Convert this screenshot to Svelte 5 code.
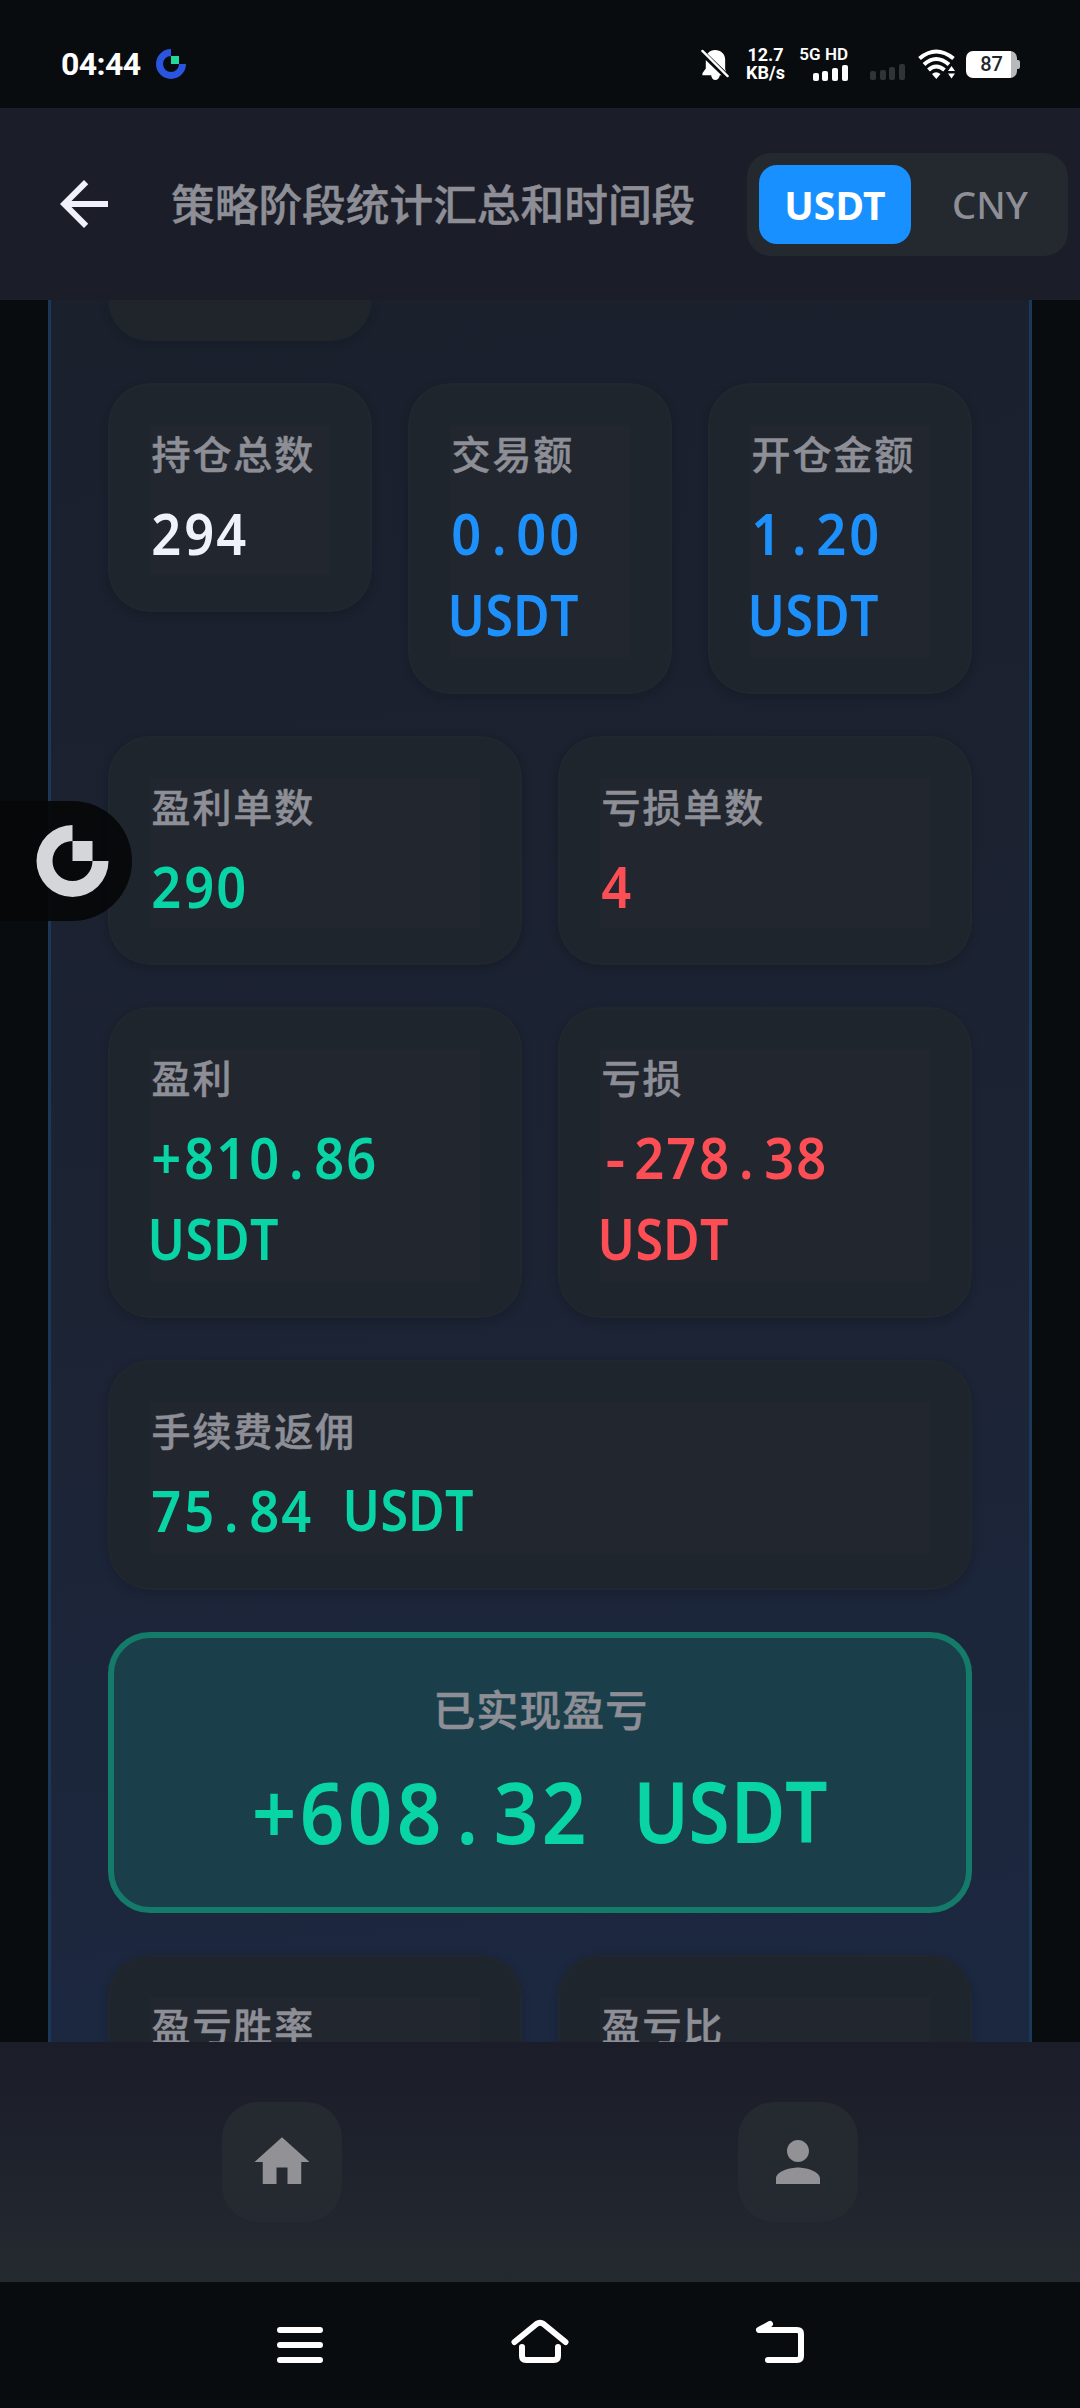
<script>
  const rows = [
    { cols: 3, cards: [
      { label: '持仓总数', value: '294', tone: 'plain' },
      { label: '交易额', value: '0.00 USDT', tone: 'blue' },
      { label: '开仓金额', value: '1.20 USDT', tone: 'blue' }
    ] },
    { cols: 2, cards: [
      { label: '盈利单数', value: '290', tone: 'green' },
      { label: '亏损单数', value: '4', tone: 'red' }
    ] },
    { cols: 2, cards: [
      { label: '盈利', value: '+810.86 USDT', tone: 'green' },
      { label: '亏损', value: '-278.38 USDT', tone: 'red' }
    ] },
    { cols: 1, cards: [
      { label: '手续费返佣', value: '75.84 USDT', tone: 'green' }
    ] }
  ];
  const lastRow = ['盈亏胜率', '盈亏比'];
  const isLetter = (c) => /[A-Z]/.test(c);
</script>

{#snippet figure(value)}
  {#each value.split(' ') as word, i}{#if i > 0}<span class="space">{' '}</span>{/if}<span class="word">{#each word as c}<span class="cell" class:letter={isLetter(c)} class:minus={c === '-'}>{c}</span>{/each}</span>{/each}
{/snippet}

<div class="screen">
  <div class="status">
    <span class="time">04:44</span>
    <svg class="mini" viewBox="0 0 30 30">
      <path d="M15 0A15 15 0 1 0 30 15H23A8 8 0 1 1 15 7Z" fill="#2a55e0" />
      <rect x="15" y="7" width="8" height="8" fill="#22d99c" />
    </svg>
    <div class="tray">
      <svg class="bell" viewBox="0 0 28 32">
        <path d="M14 1C8.500 1 4.500 5 4.500 11V20L1 25V27H10C10.500 30 12 32 14.300 32S18.500 30 19 27H26V25L24.500 21V11C24.500 5 20 1 14 1Z" fill="#fff" />
        <path d="M0 3L27 29" stroke="#080b0e" stroke-width="6" />
        <path d="M1 2L27 28" stroke="#fff" stroke-width="2.400" stroke-linecap="round" />
      </svg>
      <div class="speed"><span>12.7</span><span>KB/s</span></div>
      <div class="cellular">
        <span>5G HD</span>
        <svg viewBox="0 0 35 16"><g fill="#fff"><rect y="8" width="6" height="8" rx="2" /><rect x="9" y="6" width="6" height="10" rx="2" /><rect x="19" y="3" width="6" height="13" rx="2" /><rect x="29" width="6" height="16" rx="2" /></g></svg>
      </div>
      <svg class="dim" viewBox="0 0 35 16"><g fill="#303337"><rect y="7" width="6" height="9" rx="2" /><rect x="10" y="6" width="6" height="10" rx="2" /><rect x="19" y="3" width="6" height="13" rx="2" /><rect x="29" width="6" height="16" rx="2" /></g></svg>
      <svg class="wifi" viewBox="0 0 38 30">
        <g fill="none" stroke="#fff" stroke-width="4">
          <path d="M1.500 9.500Q18 -4.500 35.500 9.500" />
          <path d="M6 15.500Q18 4.500 31 15.500" />
          <path d="M10.500 21Q18 14 26.500 21" />
        </g>
        <path d="M14 25Q18 21.500 22.500 25L18.300 30Z" fill="#fff" />
        <path d="M30 22L33.500 17L37 22ZM30 24.500L33.500 29.500L37 24.500Z" fill="#fff" />
      </svg>
      <div class="battery"><span>87</span><i></i></div>
    </div>
  </div>

  <header>
    <svg class="back" viewBox="0 0 24 24"><path fill="#f0f1fa" d="M20 11H7.830l5.590-5.590L12 4l-8 8 8 8 1.410-1.410L7.830 13H20z" /></svg>
    <h1>策略阶段统计汇总和时间段</h1>
    <div class="toggle"><span class="on">USDT</span><span class="off">CNY</span></div>
  </header>

  <main>
    <section class="panel">
      <div class="stub"></div>
      {#each rows as row}
        <div class="row cols{row.cols}">
          {#each row.cards as card}
            <div class="card">
              <div class="label">{card.label}</div>
              <div class="value {card.tone}">{@render figure(card.value)}</div>
            </div>
          {/each}
        </div>
      {/each}
      <div class="total">
        <div class="label">已实现盈亏</div>
        <div class="value green big">{@render figure('+608.32 USDT')}</div>
      </div>
      <div class="row cols2">
        {#each lastRow as label}
          <div class="card tall"><div class="label">{label}</div></div>
        {/each}
      </div>
    </section>
  </main>

  <nav class="tabs">
    <div class="slot"><div class="tab"><svg viewBox="0 0 24 24"><path d="M10 20v-6h4v6h5v-8h3L12 3 2 12h3v8z" /></svg></div></div>
    <div class="slot"><div class="tab"><svg viewBox="0 0 24 24"><path d="M12 12c2.210 0 4-1.790 4-4s-1.790-4-4-4-4 1.790-4 4 1.790 4 4 4zm0 2c-2.670 0-8 1.340-8 4v2h16v-2c0-2.660-5.330-4-8-4z" /></svg></div></div>
  </nav>

  <div class="system">
    <svg viewBox="0 0 60 60"><path d="M10 18H50M10 33H50M10 48H50" /></svg>
    <svg viewBox="0 0 60 60"><path d="M4.500 30L26.500 12Q30 9.500 33.500 12L55.500 30M12 35V44Q12 48 16 48H44Q48 48 48 44V35" /></svg>
    <svg viewBox="0 0 60 60"><path d="M20 12L9 18H47Q51 18 51 22V44Q51 48 47 48H18" /></svg>
  </div>

  <div class="bubble">
    <svg viewBox="0 0 72 72">
      <path d="M36 0A36 36 0 1 0 72 36H56A20 20 0 1 1 36 16Z" fill="#d5d6d9" />
      <rect x="36" y="16" width="20" height="20" fill="#d5d6d9" />
    </svg>
  </div>
</div>

<style>
  :global(body) { background: #080b0e; }
  .screen {
    position: relative;
    width: 1080px;
    height: 2408px;
    display: flex;
    flex-direction: column;
    overflow: hidden;
    background: #080c0f;
    font-family: 'Noto Sans CJK SC', 'Noto Sans', sans-serif;
    color: #8d8e96;
  }
  svg { display: block; flex: none; }

  .status {
    height: 108px;
    flex: none;
    box-sizing: border-box;
    padding: 20px 60px 0 61px;
    display: flex;
    align-items: center;
    color: #fff;
    font-family: Roboto, sans-serif;
  }
  .time { width: 95px; font-size: 32px; font-weight: 700; letter-spacing: -.6px; }
  .mini { width: 30px; height: 30px; }
  .tray { margin-left: auto; display: flex; align-items: center; }
  .bell { width: 28px; height: 31px; margin-right: 18px; }
  .speed { width: 37px; margin-right: 16px; display: flex; flex-direction: column; align-items: center; font-size: 18px; line-height: 18px; font-weight: 700; white-space: nowrap; }
  .cellular { width: 48px; height: 34px; margin-right: 22px; display: flex; flex-direction: column; align-items: flex-end; justify-content: space-between; font-size: 17px; line-height: 15px; font-weight: 600; white-space: nowrap; }
  .cellular svg { width: 35px; height: 16px; }
  .dim { width: 35px; height: 16px; margin: 16px 13px 0 0; }
  .wifi { width: 38px; height: 30px; margin-right: 10px; }
  .battery {
    width: 51px;
    height: 27px;
    display: flex;
    align-items: center;
    justify-content: center;
    position: relative;
    margin-right: 3px;
    border-radius: 7px;
    background: linear-gradient(90deg, #fff 45px, #b8b9ba 45px);
    color: #24272a;
    font-size: 20px;
    font-weight: 500;
  }
  .battery i { position: absolute; right: -3px; top: 9px; width: 4px; height: 9px; border-radius: 0 2px 2px 0; background: #b8b9ba; }

  header {
    height: 192px;
    flex: none;
    box-sizing: border-box;
    padding: 0 12px 0 48px;
    display: flex;
    align-items: center;
    background: #1b1d28;
  }
  .back { width: 72px; height: 72px; }
  h1 { margin: 0 0 4px 51px; font-size: 43.700px; line-height: 60px; font-weight: 500; white-space: nowrap; -webkit-text-stroke: .5px currentColor; }
  .toggle {
    width: 321px;
    height: 103px;
    box-sizing: border-box;
    margin-left: auto;
    padding: 12px;
    display: flex;
    border-radius: 24px;
    background: #23292f;
    font-family: 'Noto Sans', sans-serif;
    font-size: 39px;
  }
  .toggle span { display: flex; align-items: center; justify-content: center; border-radius: 18px; }
  .on { width: 152px; background: #1890ff; color: #fff; font-weight: 700; letter-spacing: .2px; }
  .off { flex: 1; padding-left: 13px; font-size: 38px; font-weight: 500; }

  main { flex: 1; min-height: 0; overflow: hidden; padding: 0 48px; }
  .panel {
    padding: 0 57px;
    display: flex;
    flex-direction: column;
    gap: 42px;
    border: solid #1c3858;
    border-width: 0 3px;
    background: linear-gradient(175deg, #1a202c, #1c2333 50%, #1c2840 1742px);
  }
  .stub { width: 264px; height: 41px; border-radius: 0 0 42px 42px; background: #1f252b; box-shadow: 0 3px 8px rgba(10, 13, 20, .18); }
  .row { display: grid; gap: 36px; align-items: start; }
  .cols3 { grid-template-columns: repeat(3, 1fr); }
  .cols2 { grid-template-columns: repeat(2, 1fr); }
  .card {
    box-sizing: border-box;
    min-width: 0;
    padding: 42px 42px 36.800px;
    border-radius: 42px;
    background: linear-gradient(#21262f, #21262f) content-box, #1f252c;
    box-shadow: 0 3px 8px rgba(10, 13, 20, .22), inset 0 0 0 2px rgba(255, 255, 255, .01);
  }
  .tall { height: 230px; }
  .label { height: 54px; padding: 0 0 4px 1.500px; line-height: 54px; font-size: 39px; letter-spacing: 1.900px; font-weight: 500; white-space: nowrap; -webkit-text-stroke: .5px currentColor; }
  .value { --cell: 32.500px; margin-top: 10.800px; font-family: 'Noto Sans', sans-serif; font-size: 57px; font-weight: 600; line-height: 81.700px; }
  .word { display: inline-flex; vertical-align: top; }
  .space { display: inline-block; width: var(--cell); }
  .cols3 .space, .cols2 .space { display: inline; }
  .cell { width: var(--cell); display: flex; justify-content: center; transform: translateY(-1px) scaleX(.92); }
  .letter { transform: translateY(-2px) scaleX(.88); }
  .minus { transform: translate(-1px, -1px) scaleX(1.080); }
  .plain { color: #f0f2fa; }
  .blue { color: #1e90fb; }
  .green { color: #08d4a5; }
  .red { color: #fc4e54; }

  .total {
    height: 281px;
    box-sizing: border-box;
    padding-top: 43px;
    border: 6px solid #147a69;
    border-radius: 42px;
    background: #1a3f4a;
    text-align: center;
  }
  .total .label { font-size: 42px; letter-spacing: 1px; }
  .big { --cell: 48.400px; margin-top: 13px; font-size: 85px; line-height: 120px; white-space: nowrap; }

  .tabs { height: 240px; flex: none; box-sizing: border-box; padding: 60px 24px; display: flex; background: linear-gradient(#1b1d28, #1e222c 45%, #252a30); }
  .slot { flex: 1; display: flex; justify-content: center; }
  .tab { width: 120px; height: 120px; display: flex; align-items: center; justify-content: center; border-radius: 36px; background: #242a30; }
  .tab svg { width: 66px; height: 66px; fill: #919196; }

  .system { height: 126px; flex: none; box-sizing: border-box; padding-bottom: 6px; display: flex; align-items: center; justify-content: center; gap: 180px; }
  .system svg { width: 60px; height: 60px; fill: none; stroke: #fff; stroke-width: 6; stroke-linecap: round; stroke-linejoin: round; }

  .bubble {
    position: absolute;
    left: 0;
    top: 801px;
    width: 132px;
    height: 120px;
    box-sizing: border-box;
    padding: 24px 0 0 36px;
    border-radius: 0 60px 60px 0;
    background: rgba(5, 7, 9, .93);
  }
  .bubble svg { width: 73px; height: 72px; }
</style>
